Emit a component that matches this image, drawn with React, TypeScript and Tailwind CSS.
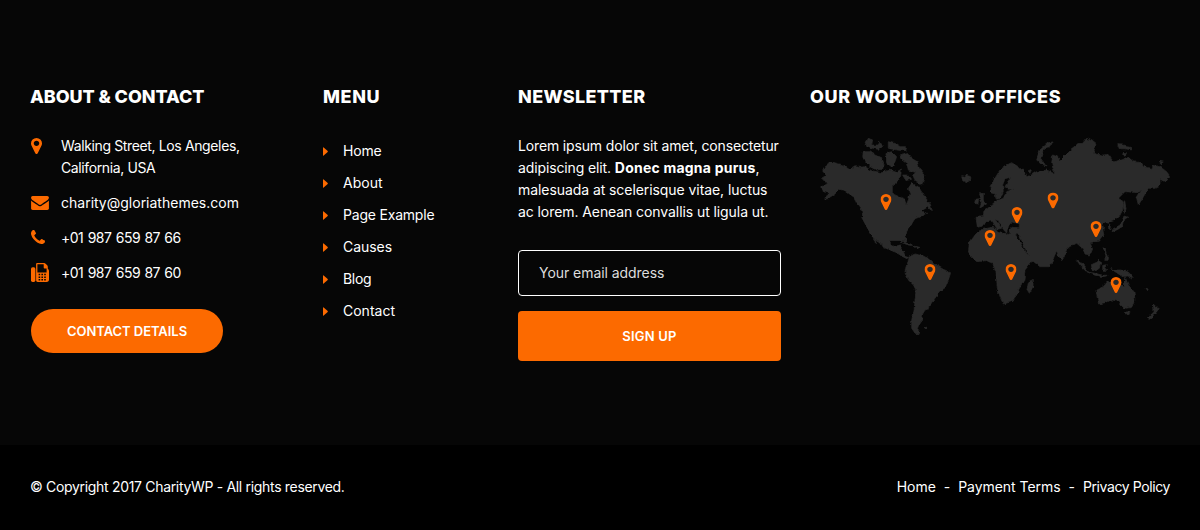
import type { ReactNode } from "react";

const PIN =
  "M1152 640q0-106-75-181t-181-75-181 75-75 181 75 181 181 75 181-75 75-181zm256 0q0 109-33 179l-364 774q-16 33-47.5 52t-67.5 19-67.5-19-46.5-52l-365-774q-33-70-33-179 0-212 150-362t362-150 362 150 150 362z";

const PinIcon = () => (
  <svg className="h-4 w-[11px] fill-[#fc6a00]" viewBox="384 128 1024 1536" preserveAspectRatio="none">
    <path d={PIN} />
  </svg>
);

const MailIcon = () => (
  <svg className="h-[14px] w-[18px] fill-[#fc6a00]" viewBox="0 256 1792 1408">
    <path d="M1792 710v794q0 66-47 113t-113 47h-1472q-66 0-113-47t-47-113v-794q44 49 101 87 362 246 497 345 57 42 92.5 65.5t94.5 48 110 24.5h2q51 0 110-24.5t94.5-48 92.5-65.5q170-123 498-345 57-39 100-87zm0-294q0 79-49 151t-122 123q-376 261-468 325-10 7-42.5 31t-54 38.5-52 32.5-57.5 27-50 9h-2q-23 0-50-9t-57.5-27-52-32.5-54-38.5-42.5-31q-91-64-262-182.5t-205-142.5q-62-42-117-115.5t-55-136.5q0-78 41.5-130t118.5-52h1472q65 0 112.5 47t47.5 113z" />
  </svg>
);

const PhoneIcon = () => (
  <svg className="size-[14px] fill-[#fc6a00]" viewBox="192 128 1408 1408">
    <path d="M1600 1240q0 27-10 70.5t-21 68.5q-21 50-122 106-94 51-186 51-27 0-53-3.5t-57.5-12.5-47-14.5-55.5-20.5-49-18q-98-35-175-83-127-79-264-216t-216-264q-48-77-83-175-3-9-18-49t-20.5-55.5-14.5-47-12.5-57.5-3.5-53q0-92 51-186 56-101 106-122 25-11 68.5-21t70.5-10q14 0 21 3 18 6 53 76 11 19 30 54t35 63.5 31 53.5q3 4 17.5 25t21.5 35.5 7 28.5q0 20-28.5 50t-62 55-62 53-28.5 46q0 9 5 22.5t8.5 20.5 14 24 11.5 19q76 137 174 235t235 174q2 1 19 11.5t24 14 20.5 8.5 22.5 5q18 0 46-28.5t53-62 55-62 50-28.5q14 0 28.5 7t35.5 21.5 25 17.5q25 15 53.5 31t63.5 35 54 30q70 35 76 53 3 7 3 21z" />
  </svg>
);

const FaxIcon = () => (
  <svg className="h-[19px] w-[18px] fill-[#fc6a00]" viewBox="0 0 18 18" preserveAspectRatio="none">
    <rect x="0" y="4" width="4.4" height="14" rx="1.6" />
    <path
      fillRule="evenodd"
      d="M6.2 0h7q.8 0 1.4.6l1.6 1.6q.6.6.6 1.4v1.8q1.2.7 1.2 2.1v8q0 2.5-2.5 2.5H6.7q-1.6 0-1.6-1.6V1q0-1 1.1-1zM6.4 1.3v7.6h9.2V5.1h-2q-.9 0-.9-.9V1.3zM7.6 10.2v1.4h1.6v-1.4zM10.4 10.2v1.4H12v-1.4zM13.2 10.2v1.4h1.6v-1.4zM7.6 12.7v1.4h1.6v-1.4zM10.4 12.7v1.4H12v-1.4zM13.2 12.7v1.4h1.6v-1.4zM7.6 15.1v1.4h1.6v-1.4zM10.4 15.1v1.4H12v-1.4zM13.2 15.1v1.4h1.6v-1.4z"
    />
  </svg>
);

const Heading = ({ tracking, children }: { tracking: string; children: string }) => (
  <h2 className={`h-[22px] text-[18px] leading-[22px] font-extrabold whitespace-nowrap ${tracking}`}>{children}</h2>
);

const contacts: { icon: ReactNode; pad: string; lines: [string, string][] }[] = [
  {
    icon: <PinIcon />,
    pad: "w-[31px] pt-[3px] pl-[0.5px]",
    lines: [
      ["Walking Street, Los Angeles,", "tracking-[-0.37px]"],
      ["California, USA", "tracking-[-0.38px]"],
    ],
  },
  { icon: <MailIcon />, pad: "w-[31px] pt-[4px] pl-px", lines: [["charity@gloriathemes.com", "tracking-normal"]] },
  {
    icon: <PhoneIcon />,
    pad: "w-[31px] pt-[3px] pl-px",
    lines: [["+01 987 659 87 66", "tracking-[-0.5px] [word-spacing:0.9px]"]],
  },
  {
    icon: <FaxIcon />,
    pad: "w-[31px] pt-[1px] pl-px",
    lines: [["+01 987 659 87 60", "tracking-[-0.5px] [word-spacing:0.9px]"]],
  },
];

const menu: [string, string][] = [
  ["Home", "tracking-[-0.2px]"],
  ["About", "tracking-normal"],
  ["Page Example", "tracking-[-0.2px]"],
  ["Causes", "tracking-[-0.05px]"],
  ["Blog", "tracking-[-0.3px]"],
  ["Contact", "tracking-normal"],
];

const offices = [
  [886, 202],
  [1017, 215],
  [1053, 200.5],
  [990, 238],
  [1096, 229],
  [930, 272],
  [1011, 272],
  [1116, 285],
];

const regions: { at: string; d: string[] }[] = [
  {
    at: "translate(810 120) scale(.3333)",
    d: [
      "62,125 80,130 100,135 120,150 135,140 150,142 165,140 185,152 215,158 240,150 262,158 274,150 272,168 262,182 250,198 250,222 270,232 285,238 288,255 295,240 300,222 295,205 305,190 325,200 335,215 345,232 360,250 367,272 352,262 335,272 350,280 330,290 315,296 305,312 290,335 285,350 290,362 195,362 185,345 170,320 160,300 155,270 140,250 130,230 105,212 88,208 75,222 50,238 45,232 60,220 40,215 35,200 50,190 35,175 50,165 38,150 45,138",
      "160,95 180,95 195,105 215,115 222,130 218,148 200,150 180,140 165,125 158,110",
      "165,75 175,55 188,60 185,75 205,75 210,65 218,80 205,88 185,84",
      "235,65 255,70 270,80 290,80 285,92 260,90 235,85",
      "228,100 245,95 260,110 255,125 245,140 230,130",
      "270,105 290,98 305,115 322,125 328,145 345,165 340,180 335,195 315,180 308,165 318,158 295,150 290,130 275,120",
      "278,165 292,165 302,178 288,182",
    ],
  },
  {
    at: "translate(860 220) scale(.3333)",
    d: [
      "5,-8 160,-8 155,10 148,22 138,32 135,45 141,58 137,66 130,55 120,48 100,46 88,58 92,75 105,82 115,76 125,75 122,90 130,95 136,108 146,112 140,116 125,108 110,98 95,92 70,82 60,65 45,45 42,55 50,68 44,64 32,40 20,18",
      "120,66 140,68 158,76 148,76 134,71",
      "162,78 180,82 172,86",
      "148,110 165,102 190,108 210,118 228,135 250,148 272,158 265,180 255,203 240,215 225,235 210,255 208,266 195,270 188,282 185,300 176,315 172,328 182,342 165,340 155,325 155,300 162,275 165,240 168,210 160,195 145,180 135,155 138,140 144,125",
      "192,322 203,322 198,327",
      "345,45 360,30 395,22 408,25 412,36 440,44 448,38 465,42 475,58 490,85 502,103 526,98 515,125 495,150 492,180 480,200 470,225 455,245 430,252 422,235 412,205 410,180 408,155 398,130 380,122 350,125 335,110 325,95 328,70",
    ],
  },
  {
    at: "translate(940 120) scale(.3333)",
    d: [
      "65,170 75,172 80,166 92,170 92,182 80,188 68,182",
      "150,200 165,175 180,150 200,135 215,128 235,140 252,155 262,172 290,155 320,150 345,162 335,130 338,105 352,110 360,122 375,115 392,90 392,365 355,380 330,440 300,440 275,420 262,365 255,345 215,342 208,330 216,322 250,324 240,312 215,306 205,320 200,340 190,328 175,302 165,298 185,325 172,328 155,300 140,302 130,318 112,322 108,292 130,290 132,270 155,255 165,245 190,235 200,215 225,206 205,208 195,200 205,182 212,172 195,176 188,195 190,215 180,235 170,238 165,222 152,218",
      "290,120 300,90 325,68 337,65 330,78 310,90 302,115 318,138 300,130",
      "118,218 130,222 130,240 140,252 120,264 124,245",
      "106,238 116,236 114,252 104,250",
      "265,152 275,148 270,160",
    ],
  },
  {
    at: "translate(1060 120) scale(.3333)",
    d: [
      "-5,125 15,105 30,90 55,70 68,70 80,55 95,62 108,72 100,100 125,105 145,104 160,125 185,120 205,112 220,125 245,128 250,140 275,145 280,136 300,140 320,155 332,172 315,185 300,178 300,195 285,205 265,205 255,222 245,240 235,255 230,235 245,210 235,218 195,215 175,235 190,245 188,270 178,290 165,300 145,310 135,305 125,320 132,345 118,364 -5,364",
      "173,74 190,75 200,80 215,82 214,90 195,86 178,86",
      "190,97 200,98 196,106 188,104",
      "298,124 310,126 304,131",
      "194,242 198,265 196,280 190,262",
      "192,288 203,292 194,298 190,318 170,330 155,336 160,326 182,314",
      "145,312 154,322 152,330 146,326",
    ],
  },
  {
    at: "translate(1020 220) scale(.3333)",
    d: [
      "-5,-8 238,-8 250,20 248,45 235,62 210,68 218,88 208,105 195,102 190,90 182,80 170,70 155,75 140,88 132,112 125,122 115,105 105,80 95,70 75,64 55,58 40,46 52,62 70,70 60,85 40,95 25,103 15,85 2,55",
      "26,185 40,178 39,200 28,220 21,208",
      "170,120 180,124 205,155 196,152 182,138",
      "202,156 225,160 250,166 266,166 250,170 225,166",
      "214,134 228,128 236,118 242,128 238,145 228,152 216,146",
      "248,136 262,134 254,142 260,154 248,154",
      "272,146 285,150 300,150 325,156 340,174 322,168 308,170 290,158",
      "250,84 256,84 258,100 266,118 254,118 258,108",
      "228,210 250,200 262,186 280,180 302,178 305,195 313,198 317,175 325,195 342,215 345,240 335,262 318,265 305,258 295,244 275,240 255,248 236,252 232,235",
      "316,276 330,275 325,288",
      "400,252 410,262 418,266 406,280 390,298 382,296 402,275",
      "375,205 386,208 380,212",
    ],
  },
];

const WorldMap = () => (
  <svg className="h-[210px] w-[362px]" viewBox="810 130 362 210">
    <defs>
      <filter id="coast" x="-2%" y="-2%" width="104%" height="104%">
        <feTurbulence type="fractalNoise" baseFrequency="0.22" numOctaves="2" seed="4" />
        <feDisplacementMap in="SourceGraphic" scale="3.5" xChannelSelector="R" yChannelSelector="G" />
      </filter>
    </defs>
    <g fill="#2b2b2b" stroke="#2b2b2b" strokeWidth="2" strokeLinejoin="round" filter="url(#coast)">
      {regions.map((r) => (
        <g key={r.at} transform={r.at}>
          {r.d.map((p) => (
            <polygon key={p} points={p} />
          ))}
        </g>
      ))}
    </g>
    {offices.map(([x, y]) => (
      <svg key={x} x={x - 5.5} y={y - 8} width="11" height="16" viewBox="384 128 1024 1536" preserveAspectRatio="none">
        <path d={PIN} fill="#fc6a00" />
      </svg>
    ))}
  </svg>
);

export default function App() {
  return (
    <footer className="flex h-[530px] w-[1200px] flex-col overflow-hidden bg-[#060606] font-['Inter',sans-serif] text-sm leading-[22px] text-white">
      <div className="flex h-[445px] pt-[86px] pl-[30px]">
        <section className="w-[293px]">
          <Heading tracking="tracking-[-0.07px]">ABOUT &amp; CONTACT</Heading>
          <ul className="mt-[27px] flex flex-col gap-[13px]">
            {contacts.map((c, i) => (
              <li key={i} className="flex">
                <span className={c.pad}>{c.icon}</span>
                <div className="whitespace-nowrap">
                  {c.lines.map(([text, tracking]) => (
                    <p key={text} className={tracking}>
                      {text}
                    </p>
                  ))}
                </div>
              </li>
            ))}
          </ul>
          <button className="mt-[25px] ml-px h-11 w-48 rounded-full bg-[#fc6a00] text-[13px] font-semibold tracking-[-0.05px]">
            CONTACT DETAILS
          </button>
        </section>
        <section className="w-[195px]">
          <Heading tracking="tracking-[0.6px]">MENU</Heading>
          <ul className="mt-8 flex flex-col gap-[10px]">
            {menu.map(([text, tracking]) => (
              <li key={text} className={`flex items-center ${tracking}`}>
                <svg className="mr-[15px] h-[9px] w-[5px] fill-[#fc6a00]" viewBox="0 0 5 9">
                  <path d="M0 .4Q0 0 .4.2L4.7 4.1Q5 4.5 4.7 4.9L.4 8.8Q0 9 0 8.6z" />
                </svg>
                {text}
              </li>
            ))}
          </ul>
        </section>
        <section className="w-[292px]">
          <Heading tracking="tracking-[0.35px]">NEWSLETTER</Heading>
          <p className="mt-[27px] whitespace-nowrap">
            <span className="tracking-[-0.15px]">Lorem ipsum dolor sit amet, consectetur</span>
            <br />
            <span className="tracking-[-0.12px]">adipiscing elit. </span>
            <b className="font-bold tracking-[0.22px]">Donec magna purus</b>,
            <br />
            <span className="tracking-[-0.07px]">malesuada at scelerisque vitae, luctus</span>
            <br />
            <span className="tracking-[-0.08px]">ac lorem. Aenean convallis ut ligula ut.</span>
          </p>
          <div className="mt-[27px] flex h-[46px] w-[263px] items-center rounded-[4px] border border-white px-5 tracking-[-0.05px] text-[#ddd]">
            Your email address
          </div>
          <button className="mt-[15px] h-[50px] w-[263px] rounded-[4px] bg-[#fc6a00] text-[13px] font-semibold tracking-[0.2px]">
            SIGN UP
          </button>
        </section>
        <section className="w-[362px]">
          <Heading tracking="tracking-[0.62px]">OUR WORLDWIDE OFFICES</Heading>
          <div className="mt-[22px]">
            <WorldMap />
          </div>
        </section>
      </div>
      <div className="flex h-[85px] items-center justify-between bg-black px-[30px] pb-px whitespace-nowrap">
        <p className="tracking-[-0.32px]">© Copyright 2017 CharityWP - All rights reserved.</p>
        <nav className="flex gap-2">
          <span className="tracking-[-0.05px]">Home</span>
          <span>-</span>
          <span className="tracking-[-0.05px]">Payment Terms</span>
          <span>-</span>
          <span className="tracking-[-0.4px]">Privacy Policy</span>
        </nav>
      </div>
    </footer>
  );
}
